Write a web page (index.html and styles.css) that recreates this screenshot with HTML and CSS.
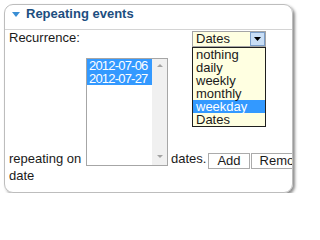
FILE: index.html
```html
<!DOCTYPE html>
<html>
<head>
<meta charset="utf-8">
<link rel="stylesheet" href="styles.css">
</head>
<body>
<div class="panel">
  <div class="header">
    <svg class="tri" width="8" height="5" viewBox="0 0 8 5"><polygon points="0,0 8,0 4,5" fill="#3a8ed4"/></svg>
    <span>Repeating events</span>
  </div>
  <div class="row1">
    <span class="label">Recurrence:</span>
    <div class="combo">
      <div class="select">
        <span class="value">Dates</span>
        <span class="arrow"><svg width="7" height="4" viewBox="0 0 7 4"><polygon points="0,0 7,0 3.5,4" fill="#000"/></svg></span>
      </div>
      <ul class="popup">
        <li>nothing</li>
        <li>daily</li>
        <li>weekly</li>
        <li>monthly</li>
        <li class="hl">weekday</li>
        <li>Dates</li>
      </ul>
    </div>
  </div>
  <div class="row2">
    <span class="label2">repeating on</span>
    <div class="listbox">
      <div class="opts">
        <div class="opt sel">2012-07-06</div>
        <div class="opt sel">2012-07-27</div>
      </div>
      <div class="sb"><span class="up"></span><span class="down"></span></div>
    </div>
    <span class="dates">dates.</span>
    <button class="btn">Add</button>
    <button class="btn btn2">Remove</button>
  </div>
  <div class="row3">date</div>
</div>
</body>
</html>
```
FILE: styles.css
```css
body {
  margin: 0;
  background: #fff;
  font-family: "Liberation Sans", Arial, sans-serif;
  font-size: 13px;
  color: #1a1a1a;
}
.panel {
  margin: 4px 0 0 4px;
  width: 287px;
  height: 187px;
  border: 1px solid #bdbdbd;
  border-radius: 9px;
  box-shadow: 2px 2px 3px rgba(0, 0, 0, 0.45);
  overflow: hidden;
}
.header {
  height: 23px;
  padding: 1px 0 0 7px;
  border-bottom: 1px solid #d4d4d4;
  display: flex;
  align-items: flex-start;
  font-weight: bold;
  color: #1c4e80;
  line-height: 15px;
}
.tri {
  margin-top: 6px;
  margin-right: 6px;
  flex-shrink: 0;
}
.row1 {
  display: flex;
  align-items: flex-start;
  line-height: 15px;
  height: 17px;
}
.label {
  padding-left: 4px;
}
.combo {
  position: relative;
  margin: 1px 26px 0 auto;
  width: 74px;
}
.select {
  height: 16px;
  box-sizing: border-box;
  border: 1px solid #a5a5a5;
  background: #ffffe1;
  display: flex;
}
.value {
  padding-left: 3px;
  line-height: 13px;
}
.arrow {
  margin-left: auto;
  width: 15px;
  height: 14px;
  box-sizing: border-box;
  border: 1px solid #7b9ec9;
  background: #c9def5;
  display: flex;
  align-items: center;
  justify-content: center;
}
.popup {
  position: absolute;
  top: 100%;
  left: 0;
  width: 74px;
  box-sizing: border-box;
  margin: 0;
  padding: 0;
  list-style: none;
  border: 1px solid #1f1f1f;
  background: #ffffe1;
}
.popup li {
  height: 13px;
  line-height: 13px;
  padding-left: 3px;
}
.popup .hl {
  background: #3399ff;
  color: #fff;
}
.row2 {
  display: flex;
  align-items: flex-end;
  margin-top: 11px;
  line-height: 15px;
}
.row2 > * {
  flex-shrink: 0;
}
.label2 {
  width: 81px;
  box-sizing: border-box;
  padding-left: 4px;
}
.listbox {
  width: 82px;
  height: 108px;
  box-sizing: border-box;
  border: 1px solid #a6a6a6;
  background: #fff;
  display: flex;
}
.opts {
  flex: 1;
  min-width: 0;
  overflow: hidden;
}
.opt {
  height: 13px;
  line-height: 13px;
  padding-left: 2px;
  white-space: nowrap;
  letter-spacing: -0.8px;
}
.opt.sel {
  background: #3399ff;
  color: #fff;
}
.sb {
  width: 15px;
  flex-shrink: 0;
  background: #f0f0f0;
  display: flex;
  flex-direction: column;
  justify-content: space-between;
  align-items: center;
  padding: 5px 0 7px;
  box-sizing: border-box;
}
.up {
  width: 0;
  height: 0;
  border-left: 3px solid transparent;
  border-right: 3px solid transparent;
  border-bottom: 3px solid #a3a3a3;
}
.down {
  width: 0;
  height: 0;
  border-left: 3px solid transparent;
  border-right: 3px solid transparent;
  border-top: 3px solid #a3a3a3;
}
.dates {
  margin-left: 3px;
}
.btn {
  font: inherit;
  color: #1a1a1a;
  background: #fff;
  border: 1px solid #ababab;
  border-radius: 0;
  height: 16px;
  box-sizing: border-box;
  padding: 0 8px 1px;
  line-height: 13px;
  margin: 0 0 -3px 2px;
}
.btn2 {
  margin-left: 1px;
}
.row3 {
  margin-top: 2px;
  padding-left: 4px;
  line-height: 15px;
}
```
